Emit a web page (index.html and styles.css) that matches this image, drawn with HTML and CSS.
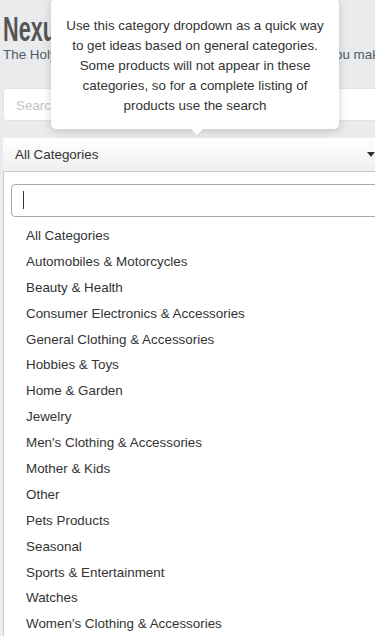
FILE: index.html
```html
<!DOCTYPE html>
<html lang="en">
<head>
    <meta charset="UTF-8" />
    <meta name="viewport" content="width=device-width, initial-scale=1.0" />
    <title>Nexus</title>
    <link rel="stylesheet" href="styles.css">
</head>
<body>

<div class="page">
    <header class="brand">
        <h1>Nexus</h1>
        <p>The Holy Grail of product research, the spot that helps you make</p>
    </header>

    <input type="text" class="search" placeholder="Search">

    <div class="select-wrap">
        <div class="select">
            <span>All Categories</span>
            <span class="caret"></span>
        </div>

        <!-- Tooltip -->
        <div class="tip">
            Use this category dropdown as a quick way to get ideas based on general categories. Some products will not appear in these categories, so for a complete listing of products use the search
        </div>
    </div>

    <!-- Dropdown -->
    <div class="dropdown">
        <div class="dd-search"><span class="cursor"></span></div>
        <ul class="options">
            <li>All Categories</li>
            <li>Automobiles &amp; Motorcycles</li>
            <li>Beauty &amp; Health</li>
            <li>Consumer Electronics &amp; Accessories</li>
            <li>General Clothing &amp; Accessories</li>
            <li>Hobbies &amp; Toys</li>
            <li>Home &amp; Garden</li>
            <li>Jewelry</li>
            <li>Men's Clothing &amp; Accessories</li>
            <li>Mother &amp; Kids</li>
            <li>Other</li>
            <li>Pets Products</li>
            <li>Seasonal</li>
            <li>Sports &amp; Entertainment</li>
            <li>Watches</li>
            <li>Women's Clothing &amp; Accessories</li>
        </ul>
    </div>
</div>

</body>
</html>
```

FILE: styles.css
```css
* {
    box-sizing: border-box;
    margin: 0;
    padding: 0;
}

body {
    font-family: 'Liberation Sans', Arial, sans-serif;
    font-size: 13.4px;
    color: #333;
    background: #e9ebed;
    overflow: hidden;
    height: 636px;
}

.page {
    width: 400px;
    padding: 0 0 0 3px;
}

.brand {
    padding-top: 12px;
    height: 88px;
}

.brand h1 {
    display: inline-block;
    font-family: 'Liberation Sans', sans-serif;
    font-weight: bold;
    font-size: 35px;
    line-height: 34px;
    color: #555;
    transform: scaleX(0.62);
    transform-origin: left;
}

.brand p {
    font-size: 13.4px;
    color: #4f5b68;
    white-space: nowrap;
    margin-top: 1px;
}

.search {
    display: block;
    width: 100%;
    height: 33px;
    border: 1px solid #e3e3e3;
    border-radius: 4px;
    background: white;
    padding: 2px 12px 0;
    font-family: inherit;
    font-size: 13.4px;
}

.search::placeholder {
    color: #c4c4c4;
}

.select-wrap {
    position: relative;
    margin-top: 16px;
}

.select {
    display: flex;
    justify-content: space-between;
    align-items: center;
    height: 34px;
    padding: 0 28px 0 12px;
    background: linear-gradient(#ffffff, #efefef);
    border-top: 1px solid #ececec;
    color: #333;
}

.caret {
    width: 0;
    height: 0;
    border-left: 4px solid transparent;
    border-right: 4px solid transparent;
    border-top: 5px solid #333;
    margin-right: -3px;
}

.tip {
    position: absolute;
    left: 48px;
    top: -138px;
    width: 288px;
    padding: 17px 12px 13px;
    background: white;
    border-radius: 5px;
    box-shadow: 0 2px 10px rgba(0, 0, 0, 0.18);
    text-align: center;
    line-height: 20px;
    color: #333;
}

.tip::after {
    content: "";
    position: absolute;
    left: 140px;
    bottom: -6px;
    border-left: 6px solid transparent;
    border-right: 6px solid transparent;
    border-top: 6px solid white;
}

.dropdown {
    background: white;
    border-left: 1px solid #c9c9c9;
    border-top: 1px solid #c9c9c9;
    padding: 12px 0 0 7px;
    height: 500px;
}

.dd-search {
    height: 33px;
    border: 1px solid #aaa;
    border-radius: 4px;
    padding: 6px 11px;
}

.cursor {
    display: block;
    width: 1px;
    height: 18px;
    background: #333;
}

.options {
    list-style: none;
    padding: 6px 0 0 15px;
}

.options li {
    height: 25.9px;
    line-height: 25.9px;
    color: #333;
    white-space: nowrap;
}
```
